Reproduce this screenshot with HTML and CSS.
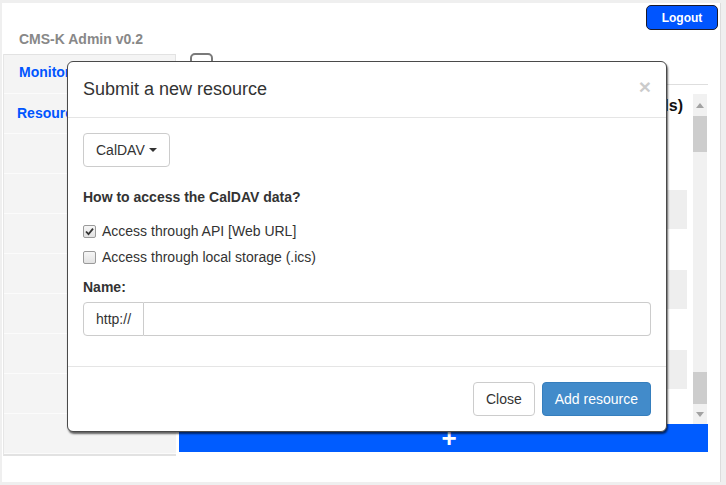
FILE: index.html
```html
<!DOCTYPE html>
<html lang="en">
<head>
<meta charset="utf-8">
<title>CMS-K Admin</title>
<link rel="stylesheet" href="styles.css">
</head>
<body>
<div class="page">
  <div class="topbar">
    <button class="logout">Logout</button>
  </div>
  <h1 class="brand">CMS-K Admin v0.2</h1>
  <div class="layout">
    <nav class="sidebar">
      <a class="nav-item active">Monitoring</a>
      <a class="nav-item">Resources</a>
      <span class="nav-item"></span>
      <span class="nav-item"></span>
      <span class="nav-item"></span>
      <span class="nav-item"></span>
      <span class="nav-item"></span>
      <span class="nav-item"></span>
      <span class="nav-item"></span>
      <span class="nav-item"></span>
    </nav>
    <main class="main">
      <div class="toolbar">
        <span class="toggle"></span>
        <span class="tool-label">Show configuration</span>
      </div>
      <div class="table-wrap">
        <div class="table">
          <div class="table-head">Registered resources (all tools)</div>
          <div class="row"></div>
          <div class="row striped"></div>
          <div class="row"></div>
          <div class="row striped"></div>
          <div class="row"></div>
          <div class="row striped"></div>
          <div class="row"></div>
        </div>
        <div class="scrollbar">
          <span class="sb-arrow up"></span>
          <span class="sb-thumb"></span>
          <span class="sb-track"></span>
          <span class="sb-thumb low"></span>
          <span class="sb-arrow down"></span>
        </div>
      </div>
      <button class="add-bar">+</button>
    </main>
  </div>
</div>

<div class="modal">
  <div class="modal-header">
    <span class="close">&times;</span>
    <h4 class="modal-title">Submit a new resource</h4>
  </div>
  <div class="modal-body">
    <button class="dropdown">CalDAV <span class="caret"></span></button>
    <div class="label">How to access the CalDAV data?</div>
    <div class="check-row">
      <span class="check checked"><svg viewBox="0 0 13 13" width="13" height="13"><path d="M3 6.5 L5.5 9.2 L10 3.6" fill="none" stroke="#333" stroke-width="1.8"/></svg></span>
      <span>Access through API [Web URL]</span>
    </div>
    <div class="check-row second">
      <span class="check"></span>
      <span>Access through local storage (.ics)</span>
    </div>
    <div class="label name-label">Name:</div>
    <div class="input-group">
      <span class="addon">http://</span>
      <span class="input"></span>
    </div>
  </div>
  <div class="modal-footer">
    <button class="btn">Close</button>
    <button class="btn primary">Add resource</button>
  </div>
</div>
</body>
</html>
```
FILE: styles.css
```css
* { box-sizing: border-box; }
html, body { margin: 0; padding: 0; }
body {
  background: #efefef;
  font-family: "Liberation Sans", Arial, sans-serif;
  font-size: 14px;
  color: #333;
  width: 726px;
  height: 485px;
  overflow: hidden;
}
.page {
  margin: 3px 5px 0 2px;
  height: 479px;
  background: #fff;
  border-right: 1px solid #dcdcdc;
}
.topbar {
  display: flex;
  justify-content: flex-end;
  padding: 2px 2px 0 0;
}
.logout {
  width: 72px;
  height: 25px;
  background: #0055ff;
  border: 1px solid #1a1a2a;
  border-radius: 5px;
  color: #fff;
  font-family: "Liberation Sans", Arial, sans-serif;
  font-size: 12px;
  font-weight: bold;
  padding: 0;
}
.brand {
  margin: 1px 0 7px 17px;
  font-size: 14px;
  line-height: 16px;
  font-weight: bold;
  color: #888;
}
.layout {
  display: flex;
  gap: 3px;
  padding-left: 1px;
}
.sidebar {
  width: 173px;
  display: flex;
  flex-direction: column;
  border-left: 1px solid #e6e6e6;
  border-bottom: 2px solid #e2e2e2;
}
.nav-item {
  display: block;
  height: 40px;
  line-height: 38px;
  background: #f4f4f4;
  border-bottom: 1px solid #fbfbfb;
  padding-left: 13px;
  color: #0055ff;
  font-weight: bold;
  font-size: 14px;
}
.nav-item.active {
  padding-left: 15px;
  line-height: 34px;
  border-top: 1px solid #e2e2e2;
  border-right: 1px solid #e2e2e2;
  height: 40px;
}
.main {
  width: 529px;
  display: flex;
  flex-direction: column;
}
.toolbar {
  height: 31px;
  display: flex;
  align-items: flex-start;
  gap: 8px;
  padding-left: 11px;
  border-bottom: 1px solid #dedede;
}
.toggle {
  width: 23px;
  height: 20px;
  margin-top: -1px;
  border: 2px solid #7a7a7a;
  border-radius: 5px;
}
.tool-label {
  margin-top: 5px;
  font-weight: bold;
  color: #222;
}
.table-wrap {
  margin-top: 9px;
  height: 330px;
  display: flex;
  gap: 6px;
  padding: 0 1px;
}
.table {
  flex: 1;
  overflow: hidden;
}
.table-head {
  height: 56px;
  padding: 2px 4px 0 0;
  line-height: 20px;
  text-align: right;
  font-weight: bold;
  font-size: 16px;
  color: #111;
}
.row {
  height: 40px;
  flex: none;
}
.row.striped {
  background: #eeeeee;
  border-bottom: 1px solid #fff;
}
.scrollbar {
  width: 14px;
  display: flex;
  flex-direction: column;
  background: #f1f1f1;
}
.sb-arrow {
  display: flex;
  justify-content: center;
  align-items: center;
  background: #f1f1f1;
}
.sb-arrow.up { height: 22px; }
.sb-arrow.down { height: 20px; }
.sb-arrow::before {
  content: "";
  border-left: 4px solid transparent;
  border-right: 4px solid transparent;
}
.sb-arrow.up::before { border-bottom: 5px solid #a3a3a3; }
.sb-arrow.down::before { border-top: 5px solid #a3a3a3; }
.sb-thumb {
  height: 36px;
  background: #cdcdcd;
}
.sb-thumb.low { height: 32px; }
.sb-track { flex: 1; }
.add-bar {
  height: 28px;
  border: 0;
  background: #005cff;
  color: #fff;
  font-family: "Liberation Sans", Arial, sans-serif;
  font-size: 26px;
  font-weight: bold;
  line-height: 28px;
  padding: 0 0 0 11px;
}

/* modal */
.modal {
  position: absolute;
  left: 67px;
  top: 61px;
  width: 600px;
  background: #fff;
  border: 1px solid #4a4a4a;
  border-radius: 6px;
  box-shadow: 1px 2px 2px rgba(0,0,0,0.6);
}
.modal-header {
  padding: 15px;
  border-bottom: 1px solid #e5e5e5;
}
.modal-title {
  margin: 0;
  font-size: 18px;
  font-weight: normal;
  line-height: 25px;
  color: #333;
}
.close {
  float: right;
  font-size: 21px;
  font-weight: bold;
  line-height: 1;
  color: #000;
  opacity: 0.2;
  margin-top: -1px;
}
.modal-body {
  padding: 15px 15px 30px;
}
.dropdown {
  height: 34px;
  padding: 6px 12px;
  background: #fff;
  border: 1px solid #ccc;
  border-radius: 4px;
  font-family: "Liberation Sans", Arial, sans-serif;
  font-size: 14px;
  color: #333;
  display: flex;
  align-items: center;
  gap: 4px;
}
.caret {
  width: 0;
  height: 0;
  border-top: 4px solid #333;
  border-left: 4px solid transparent;
  border-right: 4px solid transparent;
}
.label {
  font-weight: bold;
  line-height: 20px;
  margin-top: 20px;
  color: #333;
}
.check-row {
  display: flex;
  align-items: center;
  height: 20px;
  margin-top: 14px;
  gap: 6px;
  line-height: 20px;
}
.check-row.second { margin-top: 6px; }
.check {
  width: 13px;
  height: 13px;
  border: 1px solid #9a9a9a;
  border-radius: 2px;
  background: linear-gradient(#f6f6f6, #e2e2e2);
  display: flex;
  position: relative;
}
.check svg { position: absolute; left: -1px; top: -1px; }
.name-label { margin-top: 10px; margin-bottom: 5px; }
.input-group {
  display: flex;
  height: 34px;
}
.addon {
  width: 61px;
  padding: 6px 12px;
  line-height: 20px;
  border: 1px solid #ccc;
  border-radius: 4px 0 0 4px;
  background: #fff;
  color: #333;
}
.input {
  flex: 1;
  border: 1px solid #ccc;
  border-left: 0;
  border-radius: 0 4px 4px 0;
}
.modal-footer {
  padding: 15px;
  border-top: 1px solid #e5e5e5;
  display: flex;
  justify-content: flex-end;
  gap: 7px;
}
.btn {
  height: 34px;
  padding: 6px 12px;
  background: #fff;
  border: 1px solid #ccc;
  border-radius: 4px;
  font-family: "Liberation Sans", Arial, sans-serif;
  font-size: 14px;
  line-height: 20px;
  color: #333;
}
.btn.primary {
  background: #428bca;
  border-color: #357ebd;
  color: #fff;
}
```
